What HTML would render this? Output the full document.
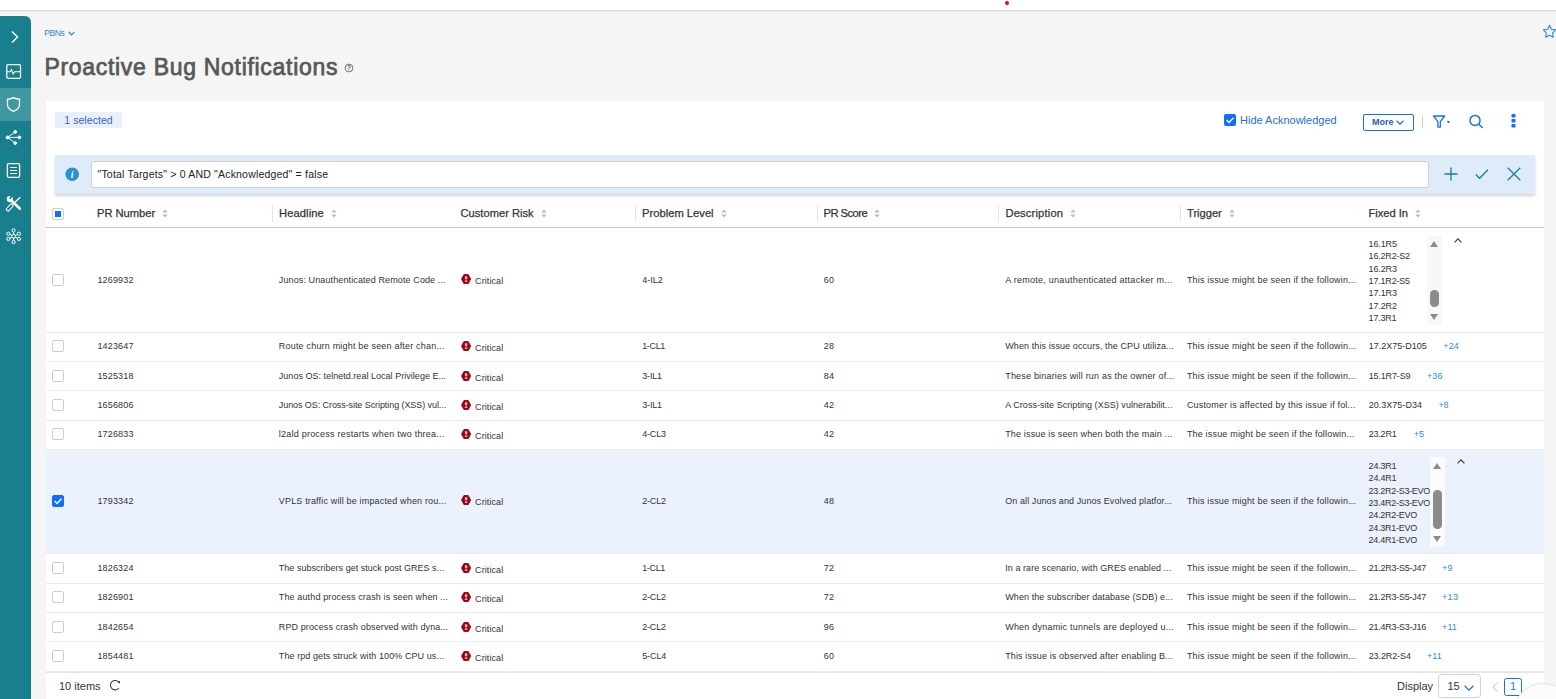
<!DOCTYPE html>
<html><head><meta charset="utf-8"><title>Proactive Bug Notifications</title>
<style>
*{box-sizing:border-box;margin:0;padding:0}
html,body{width:1556px;height:699px;overflow:hidden;background:#f5f5f5;font-family:"Liberation Sans","DejaVu Sans",sans-serif;color:#333}
#top{position:absolute;left:0;top:0;width:1556px;height:11px;background:#fff;border-bottom:1px solid #dedede;box-shadow:0 1px 1px rgba(0,0,0,.05)}
#dot{position:absolute;left:1004.900px;top:1px;width:4px;height:4px;border-radius:50%;background:#e50a0a}
#side{position:absolute;left:0;top:16px;width:31px;height:683px;background:#1a7f8c;border-top-right-radius:6px}
#side .act{position:absolute;left:0;top:72px;width:31px;height:33px;background:#4097a2}
#side svg{position:absolute;left:0;overflow:visible}
#crumb{position:absolute;left:44.200px;top:28px;font-size:8.500px;color:#2a8cc0;letter-spacing:-.35px;white-space:nowrap}
#title{position:absolute;left:44.400px;top:51px;font-size:23px;color:#585858;letter-spacing:.7px;white-space:nowrap;line-height:32px;-webkit-text-stroke:.75px #585858}
#star{position:absolute;left:1542.100px;top:24.100px}
#card{position:absolute;left:46px;top:101px;width:1498px;height:598px;background:#fff}
#badge{position:absolute;left:9px;top:11px;width:67px;height:16px;background:#e9effd;color:#3a5fc5;font-size:10.5px;letter-spacing:.05px;line-height:16px;text-align:center}
#hide{position:absolute;left:1194px;top:12px;font-size:11px;color:#1f6fd0;line-height:14px;white-space:nowrap}
#hide .cb2{position:absolute;left:-16px;top:1px;width:12px;height:12px;background:#116dff;border-radius:2px}
#more{position:absolute;left:1317px;top:13px;width:51px;height:17px;border:1px solid #1d6fe0;border-radius:2px;color:#1c5fc0;font-size:9px;font-weight:bold;line-height:15px;padding-left:8px}
#sep{position:absolute;left:1376px;top:15px;width:1px;height:12px;background:#d5cdc3}
#fbar{position:absolute;left:9px;top:54px;width:1480px;height:39px;background:#deecfa;box-shadow:0 2px 3px rgba(0,0,0,.18)}
#fbar .inp{position:absolute;left:36px;top:6px;width:1338px;height:27px;background:#fff;border:1px solid #cfcfcf;border-radius:3px;font-size:10.5px;line-height:25px;padding-left:5.5px;color:#222;letter-spacing:.19px}
#thead{position:absolute;left:0;top:93px;width:1498px;height:34px;border-bottom:1px solid #c8c8c8}
.h{position:absolute;top:1px;line-height:37px;font-size:11.2px;color:#333;white-space:nowrap;-webkit-text-stroke:.25px #383838}
.so{width:6px;height:9px;margin-left:7px;vertical-align:-1px}
.vs{position:absolute;top:10.5px;width:1px;height:17px;background:#e6e6e6}
.cb{position:absolute;left:6px;width:12px;height:12px;border:1px solid #cdcdcd;border-radius:2px;background:#fff}
.cb.on{background:#116dff;border-color:#116dff}
.cb svg{position:absolute;left:-1px;top:-1px;width:12px;height:12px}
.row{position:absolute;left:0;width:1498px;border-bottom:1px solid #ececec;font-size:9px}
.row.sel{background:#ebf1fd}
.c{position:absolute;line-height:12px;white-space:nowrap;color:#333}
.crit{position:absolute;height:12px;white-space:nowrap}
.hx{position:absolute;left:0;top:0.4px;width:10.2px;height:10.2px}
.ct{position:absolute;left:14.3px;top:1.400px;line-height:12px}
.pl{color:#2d8cf0 !important}
.fl{position:absolute;left:1322.6px;line-height:12.33px;white-space:nowrap}
.sbar{position:absolute;background:#f8f8f8}
.sel .sbar{background:#fbfbfd}
.sbar i{position:absolute;left:50%}
.up{margin-left:-4.300px;border:4.300px solid transparent;border-bottom:6px solid #8b8b8b;border-top:0}
.dn{margin-left:-4.300px;border:4.300px solid transparent;border-top:6px solid #8b8b8b;border-bottom:0}
.th{width:8.600px;margin-left:-4.300px;border-radius:4.300px;background:#8b8b8b}
.car{position:absolute;width:8px;height:5px}
#foot{position:absolute;left:0;top:571px;width:1498px;height:27px;background:#fff;box-shadow:inset 0 1px 0 #e6e6e6}
#foot .it{position:absolute;left:13px;top:6.500px;font-size:11px;line-height:14px;color:#333}
</style></head><body>
<div id="top"><i id="dot"></i></div>
<div id="side"><div class="act"></div>
<svg style="top:13px" width="31" height="16" viewBox="0 0 31 16"><path d="M12 2.5l5.5 5.5-5.5 5.5" fill="none" stroke="#fff" stroke-width="1.5"/></svg>
<svg style="top:48px" width="31" height="16" viewBox="0 0 31 16"><rect x="6.8" y="0.7" width="13.7" height="13.6" rx="1.2" fill="none" stroke="#fff" stroke-width="1.2"/><path d="M6.8 7.7h3.4l1.2-2.3 1.8 4.700 1.300-2.400h6" fill="none" stroke="#fff" stroke-width="1.100" stroke-linejoin="round"/></svg>
<svg style="top:80px" width="31" height="17" viewBox="0 0 31 17"><path d="M13.5 1.6c2 1.2 4 1.5 6 1.6v5.2c0 3.4-3 5.6-6 6.9-3-1.3-6-3.5-6-6.900V3.200c2-.1 4-.4 6-1.600z" fill="none" stroke="#fff" stroke-width="1.3"/></svg>
<svg style="top:113px" width="31" height="17" viewBox="0 0 31 17"><g stroke="#fff" stroke-width=".9" fill="#fff"><path d="M7.600 8.400L15.200 2.900M7.600 8.400L19.300 8.400M7.600 8.400L15.200 14.100" fill="none"/><circle cx="7.600" cy="8.400" r="1.500"/><circle cx="15.200" cy="2.900" r="1.400"/><circle cx="19.400" cy="8.400" r="1.400"/><circle cx="15.200" cy="14.100" r="1.400"/></g></svg>
<svg style="top:146px" width="31" height="17" viewBox="0 0 31 17"><rect x="7.400" y="1.700" width="12.200" height="13.600" rx="1.200" fill="none" stroke="#fff" stroke-width="1.300"/><path d="M10 5.500h7M10 8.500h7M10 11.500h7" stroke="#fff" stroke-width="1.200"/></svg>
<svg style="top:179px" width="31" height="17" viewBox="0 0 31 17"><g stroke="#fff" fill="none"><circle cx="9.800" cy="4.100" r="3.100" fill="#fff" stroke="none"/><path d="M9.900 3.800L12.200 0.200" stroke="#1a7f8c" stroke-width="1.800"/><path d="M11.800 6L19.700 13.500" stroke-width="2.700" stroke-linecap="round"/><path d="M20.200 2.300L13.200 9" stroke-width="1.300"/><rect x="-4" y="-1.600" width="8" height="3.200" rx="1.200" transform="translate(9.700 12.500) rotate(-47.500)" stroke-width="1"/></g></svg>
<svg style="top:212px" width="31" height="17" viewBox="0 0 31 17"><g stroke="#fff" stroke-width="1" fill="none"><path d="M13.600 8.300L13.6 2.4M13.600 8.300L13.6 14.1M13.600 8.300L8.3 5.7M13.600 8.300L18.9 5.7M13.600 8.300L8.3 10.9M13.600 8.300L18.9 10.9"/><circle cx="13.600" cy="8.300" r="1.900" fill="#1a7f8c"/><circle cx="13.6" cy="2.4" r="1.600" fill="#1a7f8c"/><circle cx="13.6" cy="14.1" r="1.600" fill="#1a7f8c"/><circle cx="8.3" cy="5.7" r="1.600" fill="#1a7f8c"/><circle cx="18.9" cy="5.7" r="1.600" fill="#1a7f8c"/><circle cx="8.3" cy="10.9" r="1.600" fill="#1a7f8c"/><circle cx="18.9" cy="10.9" r="1.600" fill="#1a7f8c"/></g></svg>
</div>
<div id="crumb">PBNs<svg width="7" height="5" viewBox="0 0 7 5" style="vertical-align:.3px;margin-left:3px"><path d="M0.700 1l2.800 2.800L6.300 1" fill="none" stroke="#2a8cc0" stroke-width="1.200"/></svg></div>
<div id="title">Proactive Bug Notifications</div>
<svg id="qm" style="position:absolute;left:343.5px;top:63.4px" width="10" height="10" viewBox="0 0 10 10"><circle cx="5" cy="5" r="3.900" fill="none" stroke="#555" stroke-width=".8"/><text x="5" y="7.400" font-size="6.500" font-weight="bold" text-anchor="middle" fill="#555" font-family="Liberation Sans,sans-serif">?</text></svg>
<svg id="star" width="15" height="15" viewBox="0 0 15 15"><path d="M7.500 1.300l1.900 4 4.300.6-3.100 3 .7 4.300-3.800-2-3.800 2 .7-4.300-3.100-3 4.300-.6z" fill="none" stroke="#1e8cf5" stroke-width="1.100" stroke-linejoin="round"/></svg>
<div id="card">
<div id="badge">1 selected</div>
<div id="hide"><span class="cb2"><svg viewBox="0 0 12 12" width="12" height="12"><path d="M2.600 6.100l2.400 2.400 4.500-4.700" fill="none" stroke="#fff" stroke-width="1.400"/></svg></span>Hide Acknowledged</div>
<div id="more">More <svg width="8" height="5" viewBox="0 0 8 5" style="vertical-align:-.3px"><path d="M0.500 0.600l3.500 3.500 3.500-3.500" fill="none" stroke="#1c5fc0" stroke-width="1.200"/></svg></div>
<i id="sep"></i>
<svg style="position:absolute;left:1386px;top:14px" width="20" height="14" viewBox="0 0 20 14"><path d="M1.600 1h11l-4.300 5.600v5.600h-2.400V6.600z" fill="none" stroke="#1d6fe0" stroke-width="1.300" stroke-linejoin="round"/><path d="M14.700 6.100h3.400l-1.700 2.300z" fill="#1d6fe0"/></svg>
<svg style="position:absolute;left:1422px;top:12px" width="16" height="16" viewBox="0 0 16 16"><circle cx="7" cy="7.400" r="5" fill="none" stroke="#1d6fe0" stroke-width="1.500"/><path d="M10.600 11l4 4" stroke="#1d6fe0" stroke-width="1.500"/></svg>
<svg style="position:absolute;left:1465px;top:13px" width="5" height="14" viewBox="0 0 5 14"><rect x=".5" y="0" width="4" height="3.600" rx=".8" fill="#116dff"/><rect x=".5" y="5" width="4" height="3.600" rx=".8" fill="#116dff"/><rect x=".5" y="10" width="4" height="3.600" rx=".8" fill="#116dff"/></svg>
<div id="fbar">
<svg style="position:absolute;left:10.400px;top:12.100px" width="14.400" height="14.400" viewBox="0 0 14 14"><circle cx="7" cy="7" r="6.600" fill="#2b8fd0"/><text x="7" y="10.300" font-size="9.500" font-style="italic" font-weight="bold" text-anchor="middle" fill="#fff" font-family="Liberation Serif,serif">i</text></svg>
<div class="inp">"Total Targets" &gt; 0 AND "Acknowledged" = false</div>
<svg style="position:absolute;left:1389px;top:12px" width="14" height="14" viewBox="0 0 14 14"><path d="M7 .5v13M.5 7h13" stroke="#1c7a9c" stroke-width="1.300"/></svg>
<svg style="position:absolute;left:1420px;top:13px" width="14" height="12" viewBox="0 0 14 12"><path d="M.8 6.500l3.800 3.800L13 1.800" fill="none" stroke="#1c7a9c" stroke-width="1.300"/></svg>
<svg style="position:absolute;left:1452px;top:12px" width="14" height="14" viewBox="0 0 14 14"><path d="M.7 .7l12.600 12.600M13.300 .7L.7 13.300" stroke="#1c7a9c" stroke-width="1.300"/></svg>
</div>
<div id="thead">
<span class="cb" style="top:14px"><i style="position:absolute;left:2px;top:2px;width:6px;height:6px;background:#116dff"></i></span>
<span class="h" style="left:51.10000000000001px;letter-spacing:-0.05px">PR Number<svg class="so" viewBox="0 0 6 9"><path d="M3 0.4L5.7 3.6H0.3z M3 8.6L0.3 5.4H5.7z" fill="#bbb"/></svg></span>
<span class="h" style="left:233.0px;letter-spacing:0.079px">Headline<svg class="so" viewBox="0 0 6 9"><path d="M3 0.4L5.7 3.6H0.3z M3 8.6L0.3 5.4H5.7z" fill="#bbb"/></svg></span>
<span class="h" style="left:414.5px;letter-spacing:-0.012px">Customer Risk<svg class="so" viewBox="0 0 6 9"><path d="M3 0.4L5.7 3.6H0.3z M3 8.6L0.3 5.4H5.7z" fill="#bbb"/></svg></span>
<span class="h" style="left:596.1px;letter-spacing:-0.001px">Problem Level<svg class="so" viewBox="0 0 6 9"><path d="M3 0.4L5.7 3.6H0.3z M3 8.6L0.3 5.4H5.7z" fill="#bbb"/></svg></span>
<span class="h" style="left:777.5px;letter-spacing:-0.522px">PR Score<svg class="so" viewBox="0 0 6 9"><path d="M3 0.4L5.7 3.6H0.3z M3 8.6L0.3 5.4H5.7z" fill="#bbb"/></svg></span>
<span class="h" style="left:959.4000000000001px;letter-spacing:0.166px">Description<svg class="so" viewBox="0 0 6 9"><path d="M3 0.4L5.7 3.6H0.3z M3 8.6L0.3 5.4H5.7z" fill="#bbb"/></svg></span>
<span class="h" style="left:1141.0px;letter-spacing:-0.033px">Trigger<svg class="so" viewBox="0 0 6 9"><path d="M3 0.4L5.7 3.6H0.3z M3 8.6L0.3 5.4H5.7z" fill="#bbb"/></svg></span>
<span class="h" style="left:1322.5px;letter-spacing:-0.037px">Fixed In<svg class="so" viewBox="0 0 6 9"><path d="M3 0.4L5.7 3.6H0.3z M3 8.6L0.3 5.4H5.7z" fill="#bbb"/></svg></span>
<i class="vs" style="left:225.7px"></i>
<i class="vs" style="left:588.8px"></i>
<i class="vs" style="left:770.5px"></i>
<i class="vs" style="left:952.0px"></i>
<i class="vs" style="left:1134.0px"></i>
</div>
<div id="rows" style="position:absolute;left:0;top:-101px;width:1498px;height:0">
<div class="row" style="top:228px;height:105px">
<span class="cb" style="top:45.80px"></span>
<span class="c" style="left:51.400000000000006px;top:46.10px;letter-spacing:0.165px">1269932</span>
<span class="c" style="left:232.8px;top:46.10px;letter-spacing:0.113px">Junos: Unauthenticated Remote Code ...</span>
<span class="crit" style="left:414.8px;top:45.70px"><svg class="hx" viewBox="0 0 10 10"><path d="M0.500 5L2.900 0.500H7.100L9.500 5L7.100 9.500H2.900Z" fill="#98000f" stroke="#98000f" stroke-width=".8" stroke-linejoin="round"/><rect x="3.800" y="2.200" width="2.400" height="3" fill="#eeb0b8"/><rect x="3.800" y="6.200" width="2.400" height="1.600" fill="#eeb0b8"/></svg><span class="ct" style="letter-spacing:0.086px">Critical</span></span>
<span class="c" style="left:596.2px;top:46.10px;letter-spacing:0.017px">4-IL2</span>
<span class="c" style="left:777.7px;top:46.10px;letter-spacing:0.342px">60</span>
<span class="c" style="left:959.2px;top:46.10px;letter-spacing:0.262px">A remote, unauthenticated attacker m...</span>
<span class="c" style="left:1140.9px;top:46.10px;letter-spacing:0.18px">This issue might be seen if the followin...</span>
<div class="fl" style="top:9.90px"><div style="letter-spacing:-0.122px">16.1R5</div><div style="letter-spacing:-0.192px">16.2R2-S2</div><div style="letter-spacing:-0.122px">16.2R3</div><div style="letter-spacing:-0.192px">17.1R2-S5</div><div style="letter-spacing:-0.122px">17.1R3</div><div style="letter-spacing:-0.122px">17.2R2</div><div style="letter-spacing:-0.205px">17.3R1</div></div><span class="sbar" style="left:1381px;top:8px;width:15px;height:89px"><i class="up" style="top:4.5px"></i><i class="th" style="top:53.700px;height:17.300px"></i><i class="dn" style="bottom:5.500px"></i></span><svg class="car" style="left:1407.800px;top:9.599999999999994px" viewBox="0 0 8 5"><path d="M0.6 4.3L4 0.9l3.400 3.400" fill="none" stroke="#333" stroke-width="1.100"/></svg>
</div>
<div class="row" style="top:333px;height:29px">
<span class="cb" style="top:6.80px"></span>
<span class="c" style="left:51.400000000000006px;top:7.10px;letter-spacing:0.165px">1423647</span>
<span class="c" style="left:232.8px;top:7.10px;letter-spacing:0.195px">Route churn might be seen after chan...</span>
<span class="crit" style="left:414.8px;top:7.70px"><svg class="hx" viewBox="0 0 10 10"><path d="M0.500 5L2.900 0.500H7.100L9.500 5L7.100 9.500H2.900Z" fill="#98000f" stroke="#98000f" stroke-width=".8" stroke-linejoin="round"/><rect x="3.800" y="2.200" width="2.400" height="3" fill="#eeb0b8"/><rect x="3.800" y="6.200" width="2.400" height="1.600" fill="#eeb0b8"/></svg><span class="ct" style="letter-spacing:0.086px">Critical</span></span>
<span class="c" style="left:596.2px;top:7.10px;letter-spacing:-0.343px">1-CL1</span>
<span class="c" style="left:777.7px;top:7.10px;letter-spacing:0.342px">28</span>
<span class="c" style="left:959.2px;top:7.10px;letter-spacing:0.099px">When this issue occurs, the CPU utiliza...</span>
<span class="c" style="left:1140.9px;top:7.10px;letter-spacing:0.18px">This issue might be seen if the followin...</span>
<span class="c" style="left:1322.7px;top:7.10px;letter-spacing:0.013px">17.2X75-D105</span>
<span class="c pl" style="left:1397.3px;top:7.10px;letter-spacing:0.14px">+24</span>
</div>
<div class="row" style="top:362px;height:29px">
<span class="cb" style="top:7.80px"></span>
<span class="c" style="left:51.400000000000006px;top:8.10px;letter-spacing:0.165px">1525318</span>
<span class="c" style="left:232.8px;top:8.10px;letter-spacing:0.028px">Junos OS: telnetd.real Local Privilege E...</span>
<span class="crit" style="left:414.8px;top:8.70px"><svg class="hx" viewBox="0 0 10 10"><path d="M0.500 5L2.900 0.500H7.100L9.500 5L7.100 9.500H2.900Z" fill="#98000f" stroke="#98000f" stroke-width=".8" stroke-linejoin="round"/><rect x="3.800" y="2.200" width="2.400" height="3" fill="#eeb0b8"/><rect x="3.800" y="6.200" width="2.400" height="1.600" fill="#eeb0b8"/></svg><span class="ct" style="letter-spacing:0.086px">Critical</span></span>
<span class="c" style="left:596.2px;top:8.10px;letter-spacing:-0.143px">3-IL1</span>
<span class="c" style="left:777.7px;top:8.10px;letter-spacing:0.342px">84</span>
<span class="c" style="left:959.2px;top:8.10px;letter-spacing:0.196px">These binaries will run as the owner of...</span>
<span class="c" style="left:1140.9px;top:8.10px;letter-spacing:0.18px">This issue might be seen if the followin...</span>
<span class="c" style="left:1322.7px;top:8.10px;letter-spacing:-0.148px">15.1R7-S9</span>
<span class="c pl" style="left:1380.9px;top:8.10px;letter-spacing:0.14px">+36</span>
</div>
<div class="row" style="top:391px;height:30px">
<span class="cb" style="top:7.80px"></span>
<span class="c" style="left:51.400000000000006px;top:8.10px;letter-spacing:0.165px">1656806</span>
<span class="c" style="left:232.8px;top:8.10px;letter-spacing:-0.076px">Junos OS: Cross-site Scripting (XSS) vul...</span>
<span class="crit" style="left:414.8px;top:8.70px"><svg class="hx" viewBox="0 0 10 10"><path d="M0.500 5L2.900 0.500H7.100L9.500 5L7.100 9.500H2.900Z" fill="#98000f" stroke="#98000f" stroke-width=".8" stroke-linejoin="round"/><rect x="3.800" y="2.200" width="2.400" height="3" fill="#eeb0b8"/><rect x="3.800" y="6.200" width="2.400" height="1.600" fill="#eeb0b8"/></svg><span class="ct" style="letter-spacing:0.086px">Critical</span></span>
<span class="c" style="left:596.2px;top:8.10px;letter-spacing:-0.143px">3-IL1</span>
<span class="c" style="left:777.7px;top:8.10px;letter-spacing:0.342px">42</span>
<span class="c" style="left:959.2px;top:8.10px;letter-spacing:0.039px">A Cross-site Scripting (XSS) vulnerabilit...</span>
<span class="c" style="left:1140.9px;top:8.10px;letter-spacing:0.177px">Customer is affected by this issue if fol...</span>
<span class="c" style="left:1322.7px;top:8.10px;letter-spacing:0.023px">20.3X75-D34</span>
<span class="c pl" style="left:1392.5px;top:8.10px;letter-spacing:-0.133px">+8</span>
</div>
<div class="row" style="top:421px;height:28.5px">
<span class="cb" style="top:6.80px"></span>
<span class="c" style="left:51.400000000000006px;top:7.10px;letter-spacing:0.165px">1726833</span>
<span class="c" style="left:232.8px;top:7.10px;letter-spacing:0.228px">l2ald process restarts when two threa...</span>
<span class="crit" style="left:414.8px;top:7.70px"><svg class="hx" viewBox="0 0 10 10"><path d="M0.500 5L2.900 0.500H7.100L9.500 5L7.100 9.500H2.900Z" fill="#98000f" stroke="#98000f" stroke-width=".8" stroke-linejoin="round"/><rect x="3.800" y="2.200" width="2.400" height="3" fill="#eeb0b8"/><rect x="3.800" y="6.200" width="2.400" height="1.600" fill="#eeb0b8"/></svg><span class="ct" style="letter-spacing:0.086px">Critical</span></span>
<span class="c" style="left:596.2px;top:7.10px;letter-spacing:-0.163px">4-CL3</span>
<span class="c" style="left:777.7px;top:7.10px;letter-spacing:0.342px">42</span>
<span class="c" style="left:959.2px;top:7.10px;letter-spacing:0.155px">The issue is seen when both the main ...</span>
<span class="c" style="left:1140.9px;top:7.10px;letter-spacing:0.179px">The issue might be seen if the followin...</span>
<span class="c" style="left:1322.7px;top:7.10px;letter-spacing:-0.205px">23.2R1</span>
<span class="c pl" style="left:1367.8px;top:7.10px;letter-spacing:-0.133px">+5</span>
</div>
<div class="row sel" style="top:449.5px;height:104.5px">
<span class="cb on" style="top:45.30px"><svg viewBox="0 0 12 12"><path d="M2.6 6.1l2.4 2.4 4.5-4.7" fill="none" stroke="#fff" stroke-width="1.4"/></svg></span>
<span class="c" style="left:51.400000000000006px;top:45.60px;letter-spacing:0.165px">1793342</span>
<span class="c" style="left:232.8px;top:45.60px;letter-spacing:0.163px">VPLS traffic will be impacted when rou...</span>
<span class="crit" style="left:414.8px;top:45.20px"><svg class="hx" viewBox="0 0 10 10"><path d="M0.500 5L2.900 0.500H7.100L9.500 5L7.100 9.500H2.900Z" fill="#98000f" stroke="#98000f" stroke-width=".8" stroke-linejoin="round"/><rect x="3.800" y="2.200" width="2.400" height="3" fill="#eeb0b8"/><rect x="3.800" y="6.200" width="2.400" height="1.600" fill="#eeb0b8"/></svg><span class="ct" style="letter-spacing:0.086px">Critical</span></span>
<span class="c" style="left:596.2px;top:45.60px;letter-spacing:-0.163px">2-CL2</span>
<span class="c" style="left:777.7px;top:45.60px;letter-spacing:0.342px">48</span>
<span class="c" style="left:959.2px;top:45.60px;letter-spacing:0.088px">On all Junos and Junos Evolved platfor...</span>
<span class="c" style="left:1140.9px;top:45.60px;letter-spacing:0.18px">This issue might be seen if the followin...</span>
<div class="fl" style="top:10.40px"><div style="letter-spacing:-0.205px">24.3R1</div><div style="letter-spacing:-0.205px">24.4R1</div><div style="letter-spacing:-0.279px">23.2R2-S3-EVO</div><div style="letter-spacing:-0.279px">23.4R2-S3-EVO</div><div style="letter-spacing:-0.263px">24.2R2-EVO</div><div style="letter-spacing:-0.263px">24.3R1-EVO</div><div style="letter-spacing:-0.263px">24.4R1-EVO</div></div><span class="sbar" style="left:1384px;top:7.5px;width:15px;height:90px"><i class="up" style="top:5.500px"></i><i class="th" style="top:32.800px;height:39px"></i><i class="dn" style="bottom:5.500px"></i></span><svg class="car" style="left:1410.700px;top:9.899999999999977px" viewBox="0 0 8 5"><path d="M0.6 4.3L4 0.9l3.400 3.400" fill="none" stroke="#333" stroke-width="1.100"/></svg>
</div>
<div class="row" style="top:554px;height:30px">
<span class="cb" style="top:7.80px"></span>
<span class="c" style="left:51.400000000000006px;top:8.10px;letter-spacing:0.165px">1826324</span>
<span class="c" style="left:232.8px;top:8.10px;letter-spacing:0.021px">The subscribers get stuck post GRES s...</span>
<span class="crit" style="left:414.8px;top:8.70px"><svg class="hx" viewBox="0 0 10 10"><path d="M0.500 5L2.900 0.500H7.100L9.500 5L7.100 9.500H2.900Z" fill="#98000f" stroke="#98000f" stroke-width=".8" stroke-linejoin="round"/><rect x="3.800" y="2.200" width="2.400" height="3" fill="#eeb0b8"/><rect x="3.800" y="6.200" width="2.400" height="1.600" fill="#eeb0b8"/></svg><span class="ct" style="letter-spacing:0.086px">Critical</span></span>
<span class="c" style="left:596.2px;top:8.10px;letter-spacing:-0.343px">1-CL1</span>
<span class="c" style="left:777.7px;top:8.10px;letter-spacing:0.342px">72</span>
<span class="c" style="left:959.2px;top:8.10px;letter-spacing:0.061px">In a rare scenario, with GRES enabled ...</span>
<span class="c" style="left:1140.9px;top:8.10px;letter-spacing:0.18px">This issue might be seen if the followin...</span>
<span class="c" style="left:1322.7px;top:8.10px;letter-spacing:-0.257px">21.2R3-S5-J47</span>
<span class="c pl" style="left:1396.0px;top:8.10px;letter-spacing:0.317px">+9</span>
</div>
<div class="row" style="top:584px;height:29px">
<span class="cb" style="top:6.80px"></span>
<span class="c" style="left:51.400000000000006px;top:7.10px;letter-spacing:0.165px">1826901</span>
<span class="c" style="left:232.8px;top:7.10px;letter-spacing:0.133px">The authd process crash is seen when ...</span>
<span class="crit" style="left:414.8px;top:7.70px"><svg class="hx" viewBox="0 0 10 10"><path d="M0.500 5L2.900 0.500H7.100L9.500 5L7.100 9.500H2.900Z" fill="#98000f" stroke="#98000f" stroke-width=".8" stroke-linejoin="round"/><rect x="3.800" y="2.200" width="2.400" height="3" fill="#eeb0b8"/><rect x="3.800" y="6.200" width="2.400" height="1.600" fill="#eeb0b8"/></svg><span class="ct" style="letter-spacing:0.086px">Critical</span></span>
<span class="c" style="left:596.2px;top:7.10px;letter-spacing:-0.163px">2-CL2</span>
<span class="c" style="left:777.7px;top:7.10px;letter-spacing:0.342px">72</span>
<span class="c" style="left:959.2px;top:7.10px;letter-spacing:0.095px">When the subscriber database (SDB) e...</span>
<span class="c" style="left:1140.9px;top:7.10px;letter-spacing:0.18px">This issue might be seen if the followin...</span>
<span class="c" style="left:1322.7px;top:7.10px;letter-spacing:-0.257px">21.2R3-S5-J47</span>
<span class="c pl" style="left:1396.0px;top:7.10px;letter-spacing:0.34px">+13</span>
</div>
<div class="row" style="top:613px;height:29px">
<span class="cb" style="top:7.80px"></span>
<span class="c" style="left:51.400000000000006px;top:8.10px;letter-spacing:0.165px">1842654</span>
<span class="c" style="left:232.8px;top:8.10px;letter-spacing:0.111px">RPD process crash observed with dyna...</span>
<span class="crit" style="left:414.8px;top:8.70px"><svg class="hx" viewBox="0 0 10 10"><path d="M0.500 5L2.900 0.500H7.100L9.500 5L7.100 9.500H2.900Z" fill="#98000f" stroke="#98000f" stroke-width=".8" stroke-linejoin="round"/><rect x="3.800" y="2.200" width="2.400" height="3" fill="#eeb0b8"/><rect x="3.800" y="6.200" width="2.400" height="1.600" fill="#eeb0b8"/></svg><span class="ct" style="letter-spacing:0.086px">Critical</span></span>
<span class="c" style="left:596.2px;top:8.10px;letter-spacing:-0.163px">2-CL2</span>
<span class="c" style="left:777.7px;top:8.10px;letter-spacing:0.342px">96</span>
<span class="c" style="left:959.2px;top:8.10px;letter-spacing:0.213px">When dynamic tunnels are deployed u...</span>
<span class="c" style="left:1140.9px;top:8.10px;letter-spacing:0.18px">This issue might be seen if the followin...</span>
<span class="c" style="left:1322.7px;top:8.10px;letter-spacing:-0.257px">21.4R3-S3-J16</span>
<span class="c pl" style="left:1396.0px;top:8.10px;letter-spacing:0.13px">+11</span>
</div>
<div class="row" style="top:642px;height:30px">
<span class="cb" style="top:7.80px"></span>
<span class="c" style="left:51.400000000000006px;top:8.10px;letter-spacing:0.165px">1854481</span>
<span class="c" style="left:232.8px;top:8.10px;letter-spacing:0.085px">The rpd gets struck with 100% CPU us...</span>
<span class="crit" style="left:414.8px;top:8.70px"><svg class="hx" viewBox="0 0 10 10"><path d="M0.500 5L2.900 0.500H7.100L9.500 5L7.100 9.500H2.900Z" fill="#98000f" stroke="#98000f" stroke-width=".8" stroke-linejoin="round"/><rect x="3.800" y="2.200" width="2.400" height="3" fill="#eeb0b8"/><rect x="3.800" y="6.200" width="2.400" height="1.600" fill="#eeb0b8"/></svg><span class="ct" style="letter-spacing:0.086px">Critical</span></span>
<span class="c" style="left:596.2px;top:8.10px;letter-spacing:-0.103px">5-CL4</span>
<span class="c" style="left:777.7px;top:8.10px;letter-spacing:0.342px">60</span>
<span class="c" style="left:959.2px;top:8.10px;letter-spacing:0.136px">This issue is observed after enabling B...</span>
<span class="c" style="left:1140.9px;top:8.10px;letter-spacing:0.18px">This issue might be seen if the followin...</span>
<span class="c" style="left:1322.7px;top:8.10px;letter-spacing:-0.103px">23.2R2-S4</span>
<span class="c pl" style="left:1381.0px;top:8.10px;letter-spacing:0.097px">+11</span>
</div>
</div>
<div id="foot"><span class="it">10 items</span>
<svg style="position:absolute;left:62px;top:7px" width="13" height="13" viewBox="0 0 13 13"><path d="M11 3.500A4.700 4.700 0 1 0 10.900 9" fill="none" stroke="#3a3a3a" stroke-width="1.100"/><path d="M9.200 2.500L12 1.900V4.800z" fill="#3a3a3a"/></svg>
<span style="position:absolute;left:1351px;top:7px;font-size:11px;line-height:14px;color:#333">Display</span>
<span style="position:absolute;left:1391.500px;top:2.400px;width:43.500px;height:23.600px;border:1px solid #d2d2d2;border-radius:3.500px;font-size:11px;line-height:22.800px;padding-left:9px;color:#333">15 <svg width="10" height="6" viewBox="0 0 10 6" style="margin-left:1.500px;vertical-align:-.5px"><path d="M.6 .8l4.400 4.300L9.400 .8" fill="none" stroke="#1d6fe0" stroke-width="1.300"/></svg></span>
<svg style="position:absolute;left:1445.500px;top:10px" width="6" height="10" viewBox="0 0 6 10"><path d="M5.200 .9L.9 5l4.300 4.100" fill="none" stroke="#bdbdbd" stroke-width="1"/></svg>
<span style="position:absolute;left:1458.200px;top:6.100px;width:17.500px;height:17.500px;border:1.500px solid #186cf0;border-radius:2.500px;font-size:11px;line-height:14.500px;text-align:center;color:#2a78f0">1</span>
<svg style="position:absolute;left:1482px;top:10px" width="6" height="10" viewBox="0 0 6 10"><path d="M.8 .9L5.100 5 .8 9.100" fill="none" stroke="#dedede" stroke-width="1"/></svg>
</div>
</div>
<div style="position:absolute;left:1514.400px;top:683.200px;width:57.200px;height:57.200px;border-radius:50%;background:#fbfbfb;border:1px solid #e4e4e4"></div>
</body></html>
